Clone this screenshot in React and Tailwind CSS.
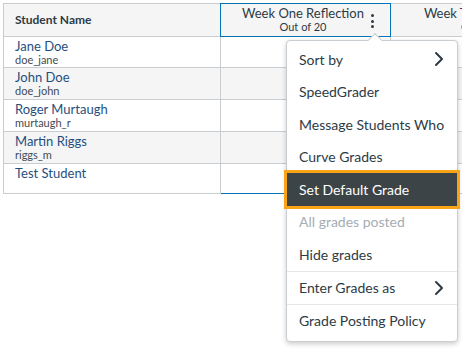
import React from 'react';
import { ChevronRight } from 'lucide-react';

const students = [
  { name: 'Jane Doe', login: 'doe_jane', h: 'h-[31px]' },
  { name: 'John Doe', login: 'doe_john', h: 'h-[32px]' },
  { name: 'Roger Murtaugh', login: 'murtaugh_r', h: 'h-[32px]' },
  { name: 'Martin Riggs', login: 'riggs_m', h: 'h-[32px]' },
  { name: 'Test Student', login: '', h: 'h-[30px]' },
];

function MenuItem({ children, chevron, disabled, active, divider }) {
  return (
    <div
      className={`relative flex items-center justify-between pl-[12px] pr-[6px] text-[14px] ${
        divider ? 'h-[33px] border-t border-[#e4e7e9]' : 'h-[32.5px]'
      } ${
        active
          ? 'z-10 bg-[#3c4447] text-white outline-[3px] outline-solid outline-[#f8a416]'
          : disabled
          ? 'text-[#a5adb3]'
          : 'text-[#2d3b45]'
      }`}
    >
      <span>{children}</span>
      {chevron && <ChevronRight size={24} strokeWidth={2} className="text-[#2d3b45]" />}
    </div>
  );
}

export default function App() {
  return (
    <div
      className="relative h-[351px] w-[462px] overflow-hidden bg-white"
      style={{ fontFamily: 'Lato, "Open Sans", sans-serif' }}
    >
      {/* Gradebook grid */}
      <div className="ml-[3px] mt-[3px] grid w-[576px] grid-cols-[217px_170px_188px] border-l border-t border-[#c7cdd1]">
        {/* Header row */}
        <div className="flex h-[33px] items-center border-b border-r border-[#c7cdd1] bg-[#f5f5f5] pl-[11px] text-[12px] font-bold text-[#2d3b45]">
          Student Name
        </div>
        <div className="relative flex h-[33px] flex-col items-center justify-center border-b border-r border-[#c7cdd1] bg-[#f5f5f5] pb-[1px] pr-[5px] text-[#2d3b45]">
          <div className="pointer-events-none absolute inset-[-1px] border border-[#0374b5]" />
          <span className="text-[13px] leading-[14px]">Week One Reflection</span>
          <span className="text-[11px] leading-[14px]">Out of 20</span>
          <div className="absolute left-[150px] top-[10px] flex flex-col gap-[2.5px]">
            <span className="h-[3px] w-[3px] rounded-full bg-[#2d3b45]" />
            <span className="h-[3px] w-[3px] rounded-full bg-[#2d3b45]" />
            <span className="h-[3px] w-[3px] rounded-full bg-[#2d3b45]" />
          </div>
        </div>
        <div className="flex h-[33px] flex-col items-center justify-center border-b border-r border-[#c7cdd1] bg-[#f5f5f5] pb-[1px] text-[#2d3b45]">
          <span className="text-[13px] leading-[14px]">Week Two Reflection</span>
          <span className="text-[11px] leading-[14px]">Out of 20</span>
        </div>

        {/* Student rows */}
        {students.map((s, i) => {
          const bg = i % 2 === 1 ? 'bg-[#f5f5f5]' : 'bg-white';
          const last = i === students.length - 1;
          return (
            <React.Fragment key={s.name}>
              <div className={`${s.h} ${bg} flex flex-col border-b border-r border-[#c7cdd1] pl-[11px] pt-[2px]`}>
                <span className="text-[13px] leading-[14px] text-[#1f4f7e]">{s.name}</span>
                {s.login && (
                  <span className="text-[11px] leading-[13px] text-[#3f4b55]">{s.login}</span>
                )}
              </div>
              <div
                className={`${s.h} ${bg} border-b border-r ${
                  last ? 'border-b-[#0374b5] border-r-[#c7cdd1]' : 'border-[#c7cdd1]'
                }`}
              />
              <div className={`${s.h} ${bg} border-b border-r border-[#c7cdd1]`} />
            </React.Fragment>
          );
        })}
      </div>

      {/* Column options menu */}
      <div className="absolute left-[286px] top-[40px] w-[172px] rounded-[4px] border border-[#c7cdd1] bg-white pb-[4px] pt-[2px] shadow-[0_2px_5px_rgba(0,0,0,0.2)]">
        <div className="absolute left-[83px] top-[-6px] h-[10px] w-[10px] rotate-45 border-l border-t border-[#c7cdd1] bg-white" />
        <MenuItem chevron>Sort by</MenuItem>
        <MenuItem>SpeedGrader</MenuItem>
        <MenuItem>Message Students Who</MenuItem>
        <MenuItem>Curve Grades</MenuItem>
        <MenuItem active>Set Default Grade</MenuItem>
        <MenuItem disabled>All grades posted</MenuItem>
        <MenuItem>Hide grades</MenuItem>
        <MenuItem chevron divider>Enter Grades as</MenuItem>
        <MenuItem divider>Grade Posting Policy</MenuItem>
      </div>
    </div>
  );
}
